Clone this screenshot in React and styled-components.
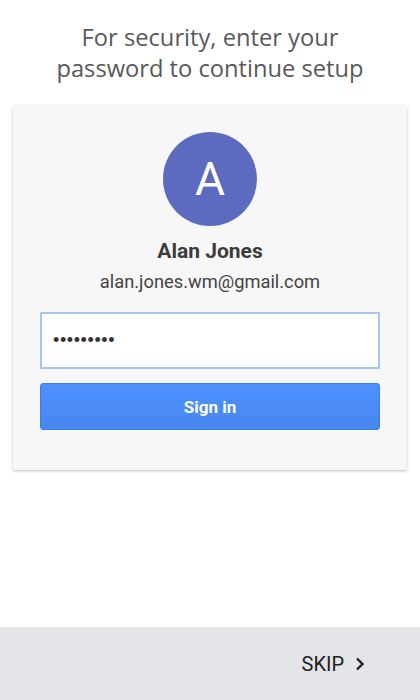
import styled, { createGlobalStyle } from "styled-components"

const Global = createGlobalStyle`
  html, body {
    margin: 0;
    padding: 0;
    background: #ffffff;
  }
  body {
    font-family: Roboto, "Liberation Sans", sans-serif;
  }
`

const Screen = styled.div`
  width: 420px;
  height: 700px;
  display: flex;
  flex-direction: column;
  overflow: hidden;
`

const Main = styled.div`
  flex: 1;
  display: flex;
  flex-direction: column;
  align-items: center;
  padding-top: 22px;
`

const Title = styled.h1`
  margin: 0;
  font-family: "Open Sans", sans-serif;
  font-weight: 400;
  font-size: 23.7px;
  line-height: 31px;
  color: #595959;
  text-align: center;
`

const Card = styled.div`
  box-sizing: border-box;
  width: 394px;
  margin-top: 22px;
  background: #f7f7f7;
  border-radius: 2px;
  box-shadow: 0 1px 3px rgba(0, 0, 0, 0.25);
  padding: 26px 27px 40px;
  display: flex;
  flex-direction: column;
  align-items: center;
`

const Avatar = styled.div`
  width: 94px;
  height: 94px;
  border-radius: 50%;
  background: #5c6bc0;
  color: #ffffff;
  font-size: 46px;
  font-weight: 400;
  display: flex;
  align-items: center;
  justify-content: center;
`

const Name = styled.div`
  margin-top: 12px;
  font-size: 21px;
  line-height: 27px;
  font-weight: 700;
  color: #3c3c3c;
`

const Email = styled.div`
  margin-top: 5px;
  font-size: 18.3px;
  line-height: 23px;
  color: #444444;
`

const PasswordInput = styled.input`
  box-sizing: border-box;
  width: 100%;
  height: 57px;
  margin-top: 19px;
  border: 2px solid #a7c5f1;
  border-radius: 1px;
  background: #ffffff;
  padding: 0 11px;
  font-size: 18px;
  letter-spacing: 0.6px;
  color: #333;
  outline: none;
`

const Button = styled.button`
  width: 100%;
  height: 47px;
  margin-top: 14px;
  border: 1px solid #3d7de8;
  border-radius: 3px;
  background: linear-gradient(#4d90fe, #4787ed);
  color: #ffffff;
  font-family: Roboto, sans-serif;
  font-size: 17px;
  font-weight: 700;
`

const Footer = styled.div`
  height: 73px;
  flex-shrink: 0;
  background: #e3e5e8;
  display: flex;
  align-items: center;
  justify-content: flex-end;
  padding-right: 55px;
`

const Skip = styled.button`
  border: 0;
  background: none;
  display: flex;
  align-items: center;
  gap: 11px;
  font-family: Roboto, sans-serif;
  font-size: 20px;
  color: #222222;
  padding: 0;
`

export default function App() {
  return (
    <Screen>
      <Global />
      <Main>
        <Title>
          For security, enter your
          <br />
          password to continue setup
        </Title>
        <Card>
          <Avatar>A</Avatar>
          <Name>Alan Jones</Name>
          <Email>alan.jones.wm@gmail.com</Email>
          <PasswordInput type="password" defaultValue="123456789" readOnly />
          <Button>Sign in</Button>
        </Card>
      </Main>
      <Footer>
        <Skip>
          SKIP
          <svg width="10" height="14" viewBox="0 0 10 14">
            <path d="M2 1.5 L7.5 7 L2 12.5" fill="none" stroke="#222" strokeWidth="2.4" />
          </svg>
        </Skip>
      </Footer>
    </Screen>
  )
}
